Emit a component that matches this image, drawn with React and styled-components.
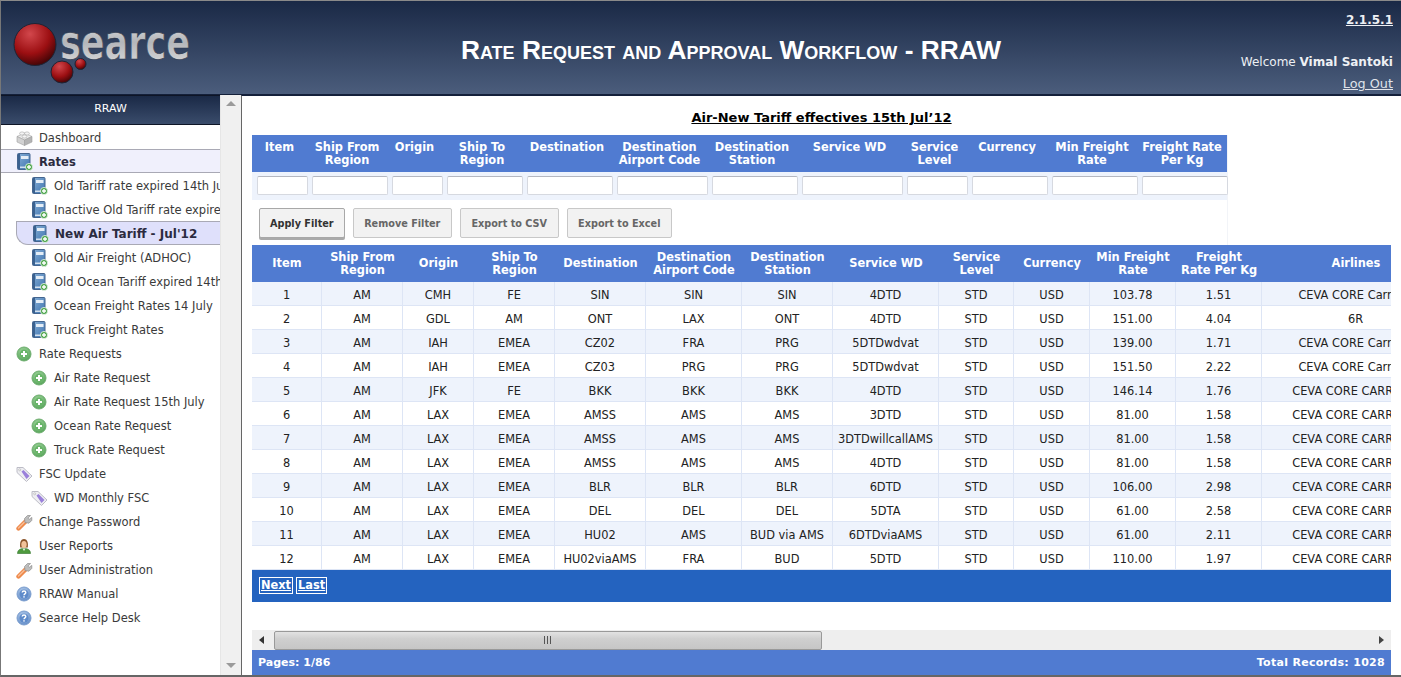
import styled, { createGlobalStyle } from "styled-components";

const GlobalStyle = createGlobalStyle`
  html, body {
    margin: 0;
    padding: 0;
    background: #fff;
    overflow: hidden;
  }
  * {
    box-sizing: border-box;
  }
`;

const FONT = `"DejaVu Sans", Verdana, sans-serif`;

const filterCols = "55px 80px 55px 80px 90px 95px 90px 105px 65px 80px 90px 90px";
const colWidths = [70, 81, 71, 81, 91, 96, 91, 106, 75, 76, 86, 86, 188];

const filterHeads = [
  "Item",
  "Ship From Region",
  "Origin",
  "Ship To Region",
  "Destination",
  "Destination Airport Code",
  "Destination Station",
  "Service WD",
  "Service Level",
  "Currency",
  "Min Freight Rate",
  "Freight Rate Per Kg",
];

// the results table breaks the last heading differently from the filter row
const tableHeads = [...filterHeads.slice(0, 11), "Freight\nRate Per Kg", "Airlines"];

const CORE = "CEVA CORE Carriers";
const CAPS = "CEVA CORE CARRIERS";

const rows = [
  ["1", "AM", "CMH", "FE", "SIN", "SIN", "SIN", "4DTD", "STD", "USD", "103.78", "1.51", CORE],
  ["2", "AM", "GDL", "AM", "ONT", "LAX", "ONT", "4DTD", "STD", "USD", "151.00", "4.04", "6R"],
  ["3", "AM", "IAH", "EMEA", "CZ02", "FRA", "PRG", "5DTDwdvat", "STD", "USD", "139.00", "1.71", CORE],
  ["4", "AM", "IAH", "EMEA", "CZ03", "PRG", "PRG", "5DTDwdvat", "STD", "USD", "151.50", "2.22", CORE],
  ["5", "AM", "JFK", "FE", "BKK", "BKK", "BKK", "4DTD", "STD", "USD", "146.14", "1.76", CAPS],
  ["6", "AM", "LAX", "EMEA", "AMSS", "AMS", "AMS", "3DTD", "STD", "USD", "81.00", "1.58", CAPS],
  ["7", "AM", "LAX", "EMEA", "AMSS", "AMS", "AMS", "3DTDwillcallAMS", "STD", "USD", "81.00", "1.58", CAPS],
  ["8", "AM", "LAX", "EMEA", "AMSS", "AMS", "AMS", "4DTD", "STD", "USD", "81.00", "1.58", CAPS],
  ["9", "AM", "LAX", "EMEA", "BLR", "BLR", "BLR", "6DTD", "STD", "USD", "106.00", "2.98", CAPS],
  ["10", "AM", "LAX", "EMEA", "DEL", "DEL", "DEL", "5DTA", "STD", "USD", "61.00", "2.58", CAPS],
  ["11", "AM", "LAX", "EMEA", "HU02", "AMS", "BUD via AMS", "6DTDviaAMS", "STD", "USD", "61.00", "2.11", CAPS],
  ["12", "AM", "LAX", "EMEA", "HU02viaAMS", "FRA", "BUD", "5DTD", "STD", "USD", "110.00", "1.97", CAPS],
];

const menu = [
  { label: "Dashboard", icon: "cube" },
  { label: "Rates", icon: "book", open: true },
  { label: "Old Tariff rate expired 14th July", icon: "book", sub: true },
  { label: "Inactive Old Tariff rate expired 14th July", icon: "book", sub: true },
  { label: "New Air Tariff - Jul'12", icon: "book", sub: true, active: true },
  { label: "Old Air Freight (ADHOC)", icon: "book", sub: true },
  { label: "Old Ocean Tariff expired 14th July", icon: "book", sub: true },
  { label: "Ocean Freight Rates 14 July", icon: "book", sub: true },
  { label: "Truck Freight Rates", icon: "book", sub: true },
  { label: "Rate Requests", icon: "plus" },
  { label: "Air Rate Request", icon: "plus", sub: true },
  { label: "Air Rate Request 15th July", icon: "plus", sub: true },
  { label: "Ocean Rate Request", icon: "plus", sub: true },
  { label: "Truck Rate Request", icon: "plus", sub: true },
  { label: "FSC Update", icon: "tag" },
  { label: "WD Monthly FSC", icon: "tag", sub: true },
  { label: "Change Password", icon: "wrench" },
  { label: "User Reports", icon: "user" },
  { label: "User Administration", icon: "wrench" },
  { label: "RRAW Manual", icon: "help" },
  { label: "Searce Help Desk", icon: "help" },
];

const BookIcon = () => (
  <svg width="17" height="18" viewBox="0 0 17 18">
    <defs>
      <linearGradient id="bookFill" x1="0" y1="0" x2="1" y2="1">
        <stop offset="0" stopColor="#86aed6" />
        <stop offset="1" stopColor="#3f75b0" />
      </linearGradient>
    </defs>
    <rect x="1.5" y="0.5" width="12.5" height="16" rx="1" fill="url(#bookFill)" stroke="#44658f" />
    <rect x="2" y="1" width="2" height="15" fill="#3a618f" />
    <rect x="5" y="3" width="7.5" height="3" fill="#e4edf6" />
    <rect x="4" y="13.5" width="9.5" height="1.5" fill="#d3e0ee" />
    <circle cx="13" cy="14" r="3.6" fill="#4fa64f" stroke="#e8f4e8" strokeWidth="0.8" />
    <path d="M13 12v4M11 14h4" stroke="#fff" strokeWidth="1.4" />
  </svg>
);

const PlusIcon = () => (
  <svg width="16" height="16" viewBox="0 0 16 16">
    <defs>
      <radialGradient id="plusFill" cx="0.45" cy="0.35" r="0.7">
        <stop offset="0" stopColor="#a9dba6" />
        <stop offset="1" stopColor="#4f9f52" />
      </radialGradient>
    </defs>
    <circle cx="8" cy="8" r="7" fill="url(#plusFill)" stroke="#6fae70" />
    <circle cx="8" cy="8" r="4.4" fill="#68b468" />
    <path d="M8 5v6M5 8h6" stroke="#fff" strokeWidth="2" />
  </svg>
);

const TagIcon = () => (
  <svg width="17" height="16" viewBox="0 0 17 16">
    <path d="M1 1.5h6l9 8.500-5.500 5.500-9.500-9z" fill="#eeeef2" stroke="#bcbcc6" />
    <path d="M5.500 5.500l2-1.500 6 6-3 3z" fill="#9a80da" />
    <circle cx="3.700" cy="3.800" r="1" fill="#fff" stroke="#aaa" strokeWidth="0.6" />
  </svg>
);

const WrenchIcon = () => (
  <svg width="17" height="17" viewBox="0 0 17 17">
    <path d="M2.500 14.500L9.500 7.500" stroke="#ee8a4c" strokeWidth="4.4" strokeLinecap="round" />
    <path d="M2.500 14L8.500 8" stroke="#f9bd96" strokeWidth="1.4" strokeLinecap="round" />
    <path d="M9 8.500L8.500 4.500 11.500 1.500h3l-2.400 2.600 1 1.300 2.700-2v3L13 9.200z" fill="#bdbdbd" stroke="#8c8c8c" strokeWidth="0.7" />
  </svg>
);

const UserIcon = () => (
  <svg width="16" height="16" viewBox="0 0 16 16">
    <path d="M1.500 15.500c0-3.500 2.500-5 6.500-5s6.500 1.500 6.500 5z" fill="#4e9a3e" stroke="#2f7428" strokeWidth="0.6" />
    <path d="M6.500 10.500L8 13l1.500-2.500z" fill="#e8f2e4" />
    <path d="M4.200 9.500C3.800 5.500 4.200 1 8 1s4.200 4.500 3.800 8.500z" fill="#8a5429" />
    <ellipse cx="8" cy="6.500" rx="2.700" ry="3.500" fill="#f2c39a" />
  </svg>
);

const HelpIcon = () => (
  <svg width="16" height="16" viewBox="0 0 16 16">
    <defs>
      <radialGradient id="helpFill" cx="0.45" cy="0.35" r="0.7">
        <stop offset="0" stopColor="#c2d6f0" />
        <stop offset="1" stopColor="#5a86c4" />
      </radialGradient>
    </defs>
    <circle cx="8" cy="8" r="7" fill="url(#helpFill)" stroke="#7d9fcf" />
    <circle cx="8" cy="8" r="4.600" fill="#5f8bca" />
    <path d="M6.200 6.600c0-2.200 3.600-2.200 3.600 0 0 1.300-1.800 1.300-1.800 2.700" fill="none" stroke="#fff" strokeWidth="1.400" />
    <rect x="7.300" y="10.200" width="1.400" height="1.400" fill="#fff" />
  </svg>
);

const CubeIcon = () => (
  <svg width="17" height="16" viewBox="0 0 17 16">
    <path d="M8.500 3L16 6.500 8.500 10 1 6.500z" fill="#ececec" stroke="#a0a0a0" strokeWidth="0.6" />
    <path d="M1 6.500L8.500 10v5.500L1 12z" fill="#d2d2d2" stroke="#a0a0a0" strokeWidth="0.6" />
    <path d="M16 6.500L8.500 10v5.500L16 12z" fill="#b4b4b4" stroke="#a0a0a0" strokeWidth="0.6" />
    <ellipse cx="6" cy="3.500" rx="2.400" ry="1.600" fill="#f4f4f4" stroke="#a8a8a8" strokeWidth="0.6" />
    <ellipse cx="11" cy="3.500" rx="2.400" ry="1.600" fill="#f4f4f4" stroke="#a8a8a8" strokeWidth="0.6" />
    <ellipse cx="8.500" cy="6.500" rx="2.400" ry="1.600" fill="#f4f4f4" stroke="#a8a8a8" strokeWidth="0.6" />
  </svg>
);

const icons = {
  book: BookIcon,
  plus: PlusIcon,
  tag: TagIcon,
  wrench: WrenchIcon,
  user: UserIcon,
  help: HelpIcon,
  cube: CubeIcon,
};

const Logo = () => (
  <LogoSvg width="210" height="93" viewBox="0 0 210 93">
    <defs>
      <radialGradient id="ball" cx="0.38" cy="0.25" r="0.85">
        <stop offset="0" stopColor="#d2474c" />
        <stop offset="0.55" stopColor="#9c0f12" />
        <stop offset="1" stopColor="#2a0203" />
      </radialGradient>
      <linearGradient id="silver" x1="0" y1="0" x2="0" y2="1">
        <stop offset="0" stopColor="#ececec" />
        <stop offset="0.5" stopColor="#b4b6ba" />
        <stop offset="1" stopColor="#e0e0e0" />
      </linearGradient>
    </defs>
    <circle cx="34" cy="43.500" r="21" fill="url(#ball)" stroke="#1c2436" />
    <circle cx="61" cy="71" r="11" fill="url(#ball)" stroke="#1c2436" />
    <circle cx="79.500" cy="63" r="5.500" fill="url(#ball)" stroke="#1c2436" />
    <LogoWord x="59" y="58" textLength="130" lengthAdjust="spacingAndGlyphs">
      searce
    </LogoWord>
  </LogoSvg>
);

const App = () => {
  return (
    <Shell>
      <GlobalStyle />
      <Header>
        <Logo />
        <Title>Rate Request and Approval Workflow - RRAW</Title>
        <UserBox>
          <Version>2.1.5.1</Version>
          <Welcome>
            Welcome <b>Vimal Santoki</b>
          </Welcome>
          <LogOut>Log Out</LogOut>
        </UserBox>
      </Header>

      <Body>
        <Sidebar>
          <SideHead>RRAW</SideHead>
          <Menu>
            {menu.map((item) => {
              const Icon = icons[item.icon];
              return (
                <MenuItem key={item.label} $sub={item.sub} $open={item.open} $active={item.active}>
                  <IconSlot>
                    <Icon />
                  </IconSlot>
                  {item.label}
                </MenuItem>
              );
            })}
          </Menu>
        </Sidebar>

        <VScroll>
          <ArrowUp />
          <ArrowDown />
        </VScroll>

        <Main>
          <PageTitle>Air-New Tariff effectives 15th Jul’12</PageTitle>

          <FilterBox>
            <FilterHead>
              {filterHeads.map((h) => (
                <FilterLabel key={h}>{h}</FilterLabel>
              ))}
            </FilterHead>
            <FilterRow>
              {filterHeads.map((h) => (
                <FilterCell key={h}>
                  <FilterInput type="text" />
                </FilterCell>
              ))}
            </FilterRow>
            <ButtonRow>
              <Button $primary>Apply Filter</Button>
              <Button>Remove Filter</Button>
              <Button>Export to CSV</Button>
              <Button>Export to Excel</Button>
            </ButtonRow>
          </FilterBox>

          <TableClip>
            <Table>
              <colgroup>
                {colWidths.map((w, i) => (
                  <col key={i} style={{ width: w }} />
                ))}
              </colgroup>
              <thead>
                <tr>
                  {tableHeads.map((h, i) => (
                    <Th key={i}>{h}</Th>
                  ))}
                </tr>
              </thead>
              <tbody>
                {rows.map((row) => (
                  <Tr key={row[0]}>
                    {row.map((cell, i) => (
                      <Td key={i}>{cell}</Td>
                    ))}
                  </Tr>
                ))}
              </tbody>
            </Table>
          </TableClip>

          <Pager>
            <PageLink>Next</PageLink>
            <PageLink>Last</PageLink>
          </Pager>

          <Spacer />

          <HScroll>
            <ArrowLeft />
            <Thumb>
              <Grip />
            </Thumb>
            <ArrowRight />
          </HScroll>

          <Footer>
            <span>Pages: 1/86</span>
            <Total>Total Records: 1028</Total>
          </Footer>
        </Main>
      </Body>
    </Shell>
  );
};

const Shell = styled.div`
  display: flex;
  flex-direction: column;
  width: 1401px;
  height: 677px;
  overflow: hidden;
  border-top: 1px solid #8a8a8a;
  border-left: 1px solid #777;
  border-bottom: 2px solid #666;
  background: #fff;
  font-family: ${FONT};
  font-size: 11px;
  color: #222;
`;

const Header = styled.header`
  display: flex;
  align-items: flex-start;
  flex: 0 0 94px;
  background: linear-gradient(#1a2946, #4b5d7c);
  border-bottom: 1px solid #14203a;
`;

const LogoSvg = styled.svg`
  flex: 0 0 210px;
  display: block;
  margin-right: 29px;
`;

const LogoWord = styled.text`
  font-family: "DejaVu Sans", Verdana, sans-serif;
  font-size: 48px;
  font-weight: 700;
  fill: url(#silver);
  stroke: #2b3448;
  stroke-width: 0.6px;
`;

const Title = styled.h1`
  flex: 1;
  margin: 35px 0 0;
  text-align: center;
  font-family: "Liberation Sans", Arial, sans-serif;
  font-size: 26.3px;
  font-weight: 700;
  font-variant: small-caps;
  line-height: 28px;
  color: #fff;
`;

const UserBox = styled.div`
  flex: 0 0 179px;
  padding: 12px 8px 0 0;
  text-align: right;
  color: #eef0f4;
  font-size: 12px;
`;

const Version = styled.div`
  font-weight: 700;
  font-size: 12px;
  line-height: 14px;
  text-decoration: underline;
`;

const Welcome = styled.div`
  margin-top: 28px;
  line-height: 15px;
`;

const LogOut = styled.div`
  margin-top: 6px;
  font-size: 12.8px;
  line-height: 15px;
  text-decoration: underline;
  color: #dfe3ea;
`;

const Body = styled.div`
  display: flex;
  flex: 1;
  min-height: 0;
`;

const Sidebar = styled.nav`
  flex: 0 0 219px;
  display: flex;
  flex-direction: column;
  overflow: hidden;
`;

const SideHead = styled.div`
  flex: 0 0 30px;
  display: flex;
  align-items: center;
  justify-content: center;
  padding-bottom: 3px;
  background: linear-gradient(#1a2946, #3a4c6b);
  border-top: 1px solid #0e1526;
  border-bottom: 1px solid #0e1526;
  color: #fff;
`;

const Menu = styled.div`
  display: flex;
  flex-direction: column;
`;

const MenuItem = styled.div`
  display: flex;
  align-items: center;
  height: 24px;
  margin-left: ${(p) => (p.$active ? "15px" : "0")};
  padding-top: 2px;
  padding-left: ${(p) => (p.$active ? "15px" : p.$sub ? "30px" : "15px")};
  white-space: nowrap;
  font-size: ${(p) => (p.$active ? "12px" : "11.5px")};
  color: ${(p) => (p.$open || p.$active ? "#2b2b40" : "#3a3a3a")};
  font-weight: ${(p) => (p.$open || p.$active ? 700 : 400)};
  background: ${(p) => (p.$active ? "#dfe0fb" : p.$open ? "#f0f0fc" : "transparent")};
  border-top: ${(p) => (p.$open || p.$active ? "1px solid #a9a9b5" : "none")};
  border-bottom: ${(p) => (p.$open || p.$active ? "1px solid #a9a9b5" : "none")};
  border-left: ${(p) => (p.$active ? "1px solid #a9a9b5" : "none")};
  border-bottom-left-radius: ${(p) => (p.$active ? "12px" : "0")};
`;

const IconSlot = styled.span`
  display: flex;
  flex: 0 0 23px;
  align-items: center;
`;

const VScroll = styled.div`
  position: relative;
  flex: 0 0 21px;
  background: #f0f0f0;
  border-left: 1px solid #e6e6e6;
`;

const ArrowUp = styled.i`
  position: absolute;
  top: 6px;
  left: 5px;
  border: 5px solid transparent;
  border-top: 0;
  border-bottom: 5px solid #9a9a9a;
`;

const ArrowDown = styled.i`
  position: absolute;
  bottom: 7px;
  left: 5px;
  border: 5px solid transparent;
  border-bottom: 0;
  border-top: 5px solid #9a9a9a;
`;

const Main = styled.main`
  flex: 1;
  min-width: 0;
  display: flex;
  flex-direction: column;
  padding: 0 10px;
  border-left: 1px solid #666;
  border-top: 1px solid #14203a;
`;

const PageTitle = styled.div`
  margin-top: 13px;
  height: 26px;
  text-align: center;
  font-size: 13px;
  line-height: 18px;
  font-weight: 700;
  color: #000;
  text-decoration: underline;
`;

const FilterBox = styled.div`
  width: 976px;
  border-right: 1px solid #f2f4f8;
`;

const FilterHead = styled.div`
  display: grid;
  grid-template-columns: ${filterCols};
  height: 37px;
  padding-top: 6px;
  background: #507bd1;
`;

const FilterLabel = styled.div`
  padding: 0 5px;
  text-align: center;
  font-size: 11.4px;
  font-weight: 700;
  line-height: 13px;
  color: #fff;
`;

const FilterRow = styled.div`
  display: grid;
  grid-template-columns: ${filterCols};
  height: 28px;
  padding-top: 4px;
  background: #eef3fc;
`;

const FilterCell = styled.div`
  padding-left: 5px;
`;

const FilterInput = styled.input`
  display: block;
  width: calc(100% + 1px);
  height: 19px;
  padding: 0;
  background: #fff;
  border: 1px solid #d6d9e0;
  border-top-color: #b4b7c0;
  border-radius: 2px;
`;

const ButtonRow = styled.div`
  display: flex;
  gap: 8px;
  height: 45px;
  padding: 8px 0 0 7px;
`;

const Button = styled.button`
  height: 30px;
  padding: 0 ${(p) => (p.$primary ? "10px" : "10.5px")};
  font-family: ${FONT};
  font-size: 9.7px;
  font-weight: 700;
  color: ${(p) => (p.$primary ? "#333" : "#666")};
  background: #f2f2f2;
  border: 1px solid ${(p) => (p.$primary ? "#a8a8a8" : "#c8c8c8")};
  border-radius: 2px;
  box-shadow: ${(p) => (p.$primary ? "0 2px 0 #aaa" : "none")};
`;

const TableClip = styled.div`
  overflow: hidden;
`;

const Table = styled.table`
  table-layout: fixed;
  width: 1198px;
  border-collapse: separate;
  border-spacing: 0;
`;

const Th = styled.th`
  height: 37px;
  padding: 0 2px;
  background: #507bd1;
  color: #fff;
  font-size: 11.4px;
  font-weight: 700;
  line-height: 13px;
  text-align: center;
  white-space: pre-line;
`;

const Tr = styled.tr`
  &:nth-child(odd) td {
    background: #eef3fc;
  }
`;

const Td = styled.td`
  height: 24px;
  padding: 2px 0 0;
  text-align: center;
  white-space: nowrap;
  overflow: hidden;
  font-size: 11.4px;
  color: #222;
  background: #fff;
  border-right: 1px solid #dde5f5;
  border-bottom: 1px solid #dde5f5;
`;

const Pager = styled.div`
  display: flex;
  flex: 0 0 32px;
  gap: 3px;
  padding: 7px 0 0 7px;
  background: #2463bf;
  align-items: flex-start;
`;

const PageLink = styled.a`
  padding: 0 1px;
  border: 1px solid #fff;
  line-height: 15px;
  font-size: 11.4px;
  font-weight: 700;
  color: #fff;
  text-decoration: underline;
`;

const Spacer = styled.div`
  flex: 1;
`;

const HScroll = styled.div`
  display: flex;
  align-items: center;
  flex: 0 0 20px;
  padding: 0 7px;
  background: #eeeeee;
`;

const ArrowLeft = styled.i`
  border: 4px solid transparent;
  border-left: 0;
  border-right: 5px solid #333;
`;

const ArrowRight = styled.i`
  margin-left: auto;
  border: 4px solid transparent;
  border-right: 0;
  border-left: 5px solid #444;
`;

const Thumb = styled.div`
  display: flex;
  align-items: center;
  justify-content: center;
  width: 548px;
  height: 19px;
  margin-left: 10px;
  background: linear-gradient(#e2e2e2, #cfcfcf 40%, #c6c6c6);
  border: 1px solid #999;
  border-radius: 2px;
`;

const Grip = styled.span`
  width: 8px;
  height: 8px;
  background: repeating-linear-gradient(90deg, #555 0 1px, transparent 1px 3px);
`;

const Footer = styled.footer`
  display: flex;
  justify-content: space-between;
  align-items: center;
  flex: 0 0 25px;
  padding: 0 6px;
  background: #507bd1;
  color: #fff;
  font-weight: 700;
`;

const Total = styled.span`
  letter-spacing: 0.3px;
`;

export default App;
